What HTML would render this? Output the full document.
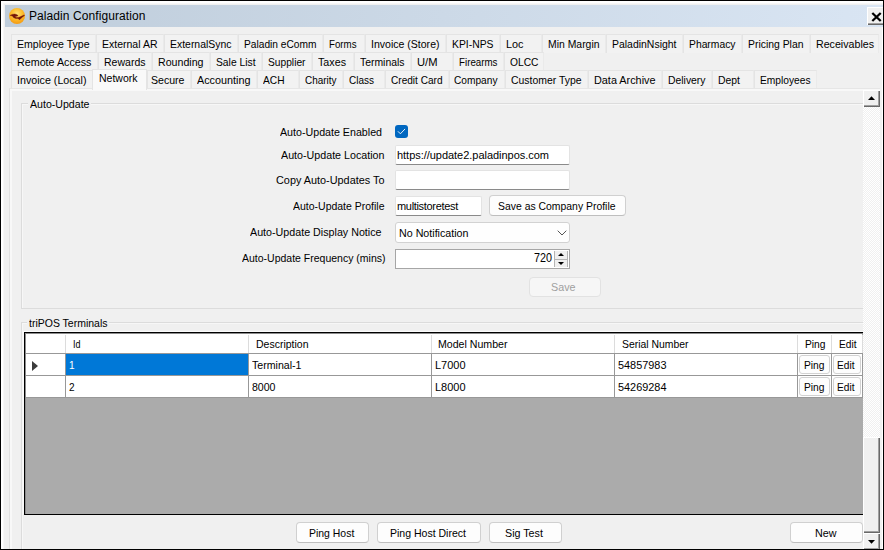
<!DOCTYPE html>
<html lang="en"><head><meta charset="utf-8"><title>Paladin Configuration</title>
<style>
html,body{margin:0;padding:0;}
body{width:884px;height:550px;overflow:hidden;background:#f0f0f0;font-family:"Liberation Sans",sans-serif;}
#win{position:absolute;left:0;top:0;width:884px;height:550px;background:#f0f0f0;overflow:hidden;}
#win>*{position:absolute;}
#frame{left:0;top:0;width:884px;height:550px;box-sizing:border-box;border:1px solid #000;box-shadow:inset 2px 2px 0 #fff,inset 3px 3px 0 #f7f7f7;pointer-events:none;}
#cap{left:5px;top:5px;width:878px;height:22px;background:linear-gradient(90deg,#bfcddb,#d9e5f3);}
#ico{left:8px;top:7px;}
.t{position:absolute;display:inline-block;white-space:nowrap;line-height:1;color:#000;font-size:11.5px;transform-origin:0 0;}
.cap{color:#000;}
.seg{}
#close{left:867px;top:7px;width:19px;height:18px;background:#f0f0f0;box-shadow:inset 1px 1px 0 #fff,inset -1px -1px 0 #696969,inset -2px -2px 0 #a0a0a0;}
#close svg{position:absolute;left:4px;top:4.8px;}
.tab{height:19px;box-sizing:border-box;border:1px solid #e4e4e4;border-right-color:#eaeaea;border-bottom:none;background:#f2f2f2;}
#tabpage{left:9px;top:88px;width:880px;height:470px;box-sizing:border-box;border:1px solid #e0e0e0;border-top-color:#e6e6e6;box-shadow:inset 2px 2px 0 #f8f8f8;}
#seltab{left:92px;top:69px;width:55px;height:21px;box-sizing:border-box;border:1px solid #e4e4e4;border-bottom:none;background:#f9f9f9;}
.grp{box-sizing:border-box;border:1px solid #dcdcdc;box-shadow:inset 1px 1px 0 #f7f7f7;}
.lbg{height:12px;background:#f0f0f0;}
#chk{left:395px;top:125px;width:13px;height:13px;border-radius:3px;background:#0067c0;}
#chk svg{position:absolute;left:0;top:0;}
.tb{box-sizing:border-box;background:#fff;border:1px solid #e3e3e3;border-bottom:1px solid #8a8a8a;border-radius:2px;}
.btn{box-sizing:border-box;background:#fdfdfd;border:1px solid #d0d0d0;border-bottom-color:#bebebe;border-radius:4px;}
.btn.dis{background:#f6f6f6;border-color:#e2e2e2;}
.cmb{box-sizing:border-box;background:#fefefe;border:1px solid #d2d2d2;border-radius:3px;}
#num{left:395px;top:249px;width:175px;height:20px;box-sizing:border-box;border:1px solid #a6a6a6;background:#fff;}
#num .sp{position:absolute;left:158px;width:14px;height:8px;box-sizing:border-box;background:#f0f0f0;border:1px solid #b4b4b4;border-top:none;border-bottom:none;}
#num i{position:absolute;left:3px;width:0;height:0;border-left:3px solid transparent;border-right:3px solid transparent;}
#num i.up{top:2px;border-bottom:3px solid #000;}
#num i.dn{top:1.5px;border-top:3px solid #000;}
#grid{left:24px;top:332px;width:845px;height:183px;box-sizing:border-box;background:#ababab;border:1px solid #000;box-shadow:-1px -1px 0 #fbfbfb;overflow:hidden;}
.g1{left:0;top:0;width:100%;height:1px;background:#8c8c8c;}
.g2{left:0;top:0;width:1px;height:100%;background:#8c8c8c;}
#grid>*{position:absolute;}
#ghead{left:0;top:1px;width:837px;height:19px;background:#fff;}
.row{left:0;width:837px;height:21px;background:#fff;}
.vl{top:20px;width:1px;height:45px;background:#989898;}
.vh{top:2px;width:1px;height:18px;background:#dcdcdc;}
.hl{left:0;height:1px;width:838px;background:#989898;}
#selc{left:41px;top:21px;width:182px;height:21px;background:#0078d7;}
#arrow{left:7px;top:27.5px;width:0;height:0;border-top:5px solid transparent;border-bottom:5px solid transparent;border-left:6px solid #3c3c3c;}
.gb{height:19px;box-sizing:border-box;background:#fdfdfd;border:1px solid #d2d2d2;border-radius:3px;}
#sb{left:863px;top:90px;width:17px;height:460px;background:#f8f8f8;background-image:conic-gradient(#fff 25%,#f0f0f0 0 50%,#fff 0 75%,#f0f0f0 0);background-size:2px 2px;}
#sb>*{position:absolute;left:0;}
.sbb{width:17px;height:17px;background:#f0f0f0;box-shadow:inset 1px 1px 0 #fff,inset -1px -1px 0 #696969,inset -2px -2px 0 #a0a0a0;}
#thumb{top:347px;width:17px;height:96px;background:#f0f0f0;box-shadow:inset 1px 1px 0 #fff,inset -1px -1px 0 #696969,inset -2px -2px 0 #a0a0a0;}
.sbb svg{position:absolute;left:5px;}
.up2{top:6px;}
.dn2{top:7px;}
#edge{left:880px;top:27px;width:3px;height:522px;background:#f0f0f0;box-shadow:inset -1px 0 0 #fff;}
</style></head>
<body>
<div id="win">
<div id="cap"></div>
<svg id="ico" width="18" height="18" viewBox="0 0 18 18"><defs><radialGradient id="g" cx="0.5" cy="0.36" r="0.62"><stop offset="0" stop-color="#ffe27a"/><stop offset="0.55" stop-color="#fdbb2c"/><stop offset="1" stop-color="#f59d14"/></radialGradient></defs><circle cx="9" cy="9" r="8" fill="url(#g)"/><path transform="translate(-2,-2) scale(0.04)" d="M100,262 L150,235 L215,225 L260,235 L295,255 L300,268 L270,280 L235,290 L230,303 L260,315 L300,310 L345,298 L395,278 L440,255 L465,250 L450,275 L412,300 L380,330 L357,350 L335,372 L322,347 L290,337 L240,337 L200,320 L180,308 L175,285 L140,270 Z" fill="#74130a" stroke="#74130a" stroke-width="9" stroke-linejoin="round"/></svg>
<span id="t1" class="t cap" style="left:29px;top:10px;font-size:12px;letter-spacing:0.079px;">Paladin Configuration</span>
<div id="close"><svg width="11" height="10" viewBox="0 0 11 10"><path d="M1.3 1 L9.7 9 M9.7 1 L1.3 9" stroke="#000" stroke-width="2.3" fill="none"/></svg></div>
<div class="tab" style="left:11px;top:34px;width:85px;"></div>
<span id="t2" class="t " style="left:17px;top:39px;transform:scaleX(0.9170);">Employee Type</span>
<div class="tab" style="left:96px;top:34px;width:68px;"></div>
<span id="t3" class="t " style="left:102px;top:39px;transform:scaleX(0.9138);">External AR</span>
<div class="tab" style="left:164px;top:34px;width:74px;"></div>
<span id="t4" class="t " style="left:170px;top:39px;transform:scaleX(0.9075);">ExternalSync</span>
<div class="tab" style="left:238px;top:34px;width:85px;"></div>
<span id="t5" class="t " style="left:244px;top:39px;transform:scaleX(0.8860);">Paladin eComm</span>
<div class="tab" style="left:323px;top:34px;width:42px;"></div>
<span id="t6" class="t " style="left:329px;top:39px;transform:scaleX(0.8437);">Forms</span>
<div class="tab" style="left:365px;top:34px;width:81px;"></div>
<span id="t7" class="t " style="left:371px;top:39px;transform:scaleX(0.9160);">Invoice (Store)</span>
<div class="tab" style="left:446px;top:34px;width:54px;"></div>
<span id="t8" class="t " style="left:452px;top:39px;transform:scaleX(0.9019);">KPI-NPS</span>
<div class="tab" style="left:500px;top:34px;width:42px;"></div>
<span id="t9" class="t " style="left:506px;top:39px;transform:scaleX(0.9436);">Loc</span>
<div class="tab" style="left:542px;top:34px;width:64px;"></div>
<span id="t10" class="t " style="left:548px;top:39px;transform:scaleX(0.9052);">Min Margin</span>
<div class="tab" style="left:606px;top:34px;width:77px;"></div>
<span id="t11" class="t " style="left:612px;top:39px;transform:scaleX(0.9089);">PaladinNsight</span>
<div class="tab" style="left:683px;top:34px;width:59px;"></div>
<span id="t12" class="t " style="left:689px;top:39px;transform:scaleX(0.8980);">Pharmacy</span>
<div class="tab" style="left:742px;top:34px;width:68px;"></div>
<span id="t13" class="t " style="left:748px;top:39px;transform:scaleX(0.9043);">Pricing Plan</span>
<div class="tab" style="left:810px;top:34px;width:69px;"></div>
<span id="t14" class="t " style="left:816px;top:39px;transform:scaleX(0.9257);">Receivables</span>
<div class="tab" style="left:11px;top:52px;width:87px;"></div>
<span id="t15" class="t " style="left:17px;top:57px;transform:scaleX(0.9323);">Remote Access</span>
<div class="tab" style="left:98px;top:52px;width:54px;"></div>
<span id="t16" class="t " style="left:104px;top:57px;transform:scaleX(0.9143);">Rewards</span>
<div class="tab" style="left:152px;top:52px;width:58px;"></div>
<span id="t17" class="t " style="left:158px;top:57px;transform:scaleX(0.9242);">Rounding</span>
<div class="tab" style="left:210px;top:52px;width:52px;"></div>
<span id="t18" class="t " style="left:216px;top:57px;transform:scaleX(0.8955);">Sale List</span>
<div class="tab" style="left:262px;top:52px;width:50px;"></div>
<span id="t19" class="t " style="left:268px;top:57px;transform:scaleX(0.8886);">Supplier</span>
<div class="tab" style="left:312px;top:52px;width:42px;"></div>
<span id="t20" class="t " style="left:318px;top:57px;transform:scaleX(0.9319);">Taxes</span>
<div class="tab" style="left:354px;top:52px;width:57px;"></div>
<span id="t21" class="t " style="left:360px;top:57px;transform:scaleX(0.9041);">Terminals</span>
<div class="tab" style="left:411px;top:52px;width:42px;"></div>
<span id="t22" class="t " style="left:417px;top:57px;transform:scaleX(0.9719);">U/M</span>
<div class="tab" style="left:453px;top:52px;width:51px;"></div>
<span id="t23" class="t " style="left:459px;top:57px;transform:scaleX(0.8485);">Firearms</span>
<div class="tab" style="left:504px;top:52px;width:40px;"></div>
<span id="t24" class="t " style="left:510px;top:57px;transform:scaleX(0.8919);">OLCC</span>
<div class="tab" style="left:11px;top:70px;width:82px;"></div>
<span id="t25" class="t " style="left:17px;top:75px;transform:scaleX(0.9292);">Invoice (Local)</span>
<div class="tab" style="left:147px;top:70px;width:44px;"></div>
<span id="t26" class="t " style="left:151px;top:75px;transform:scaleX(0.9194);">Secure</span>
<div class="tab" style="left:191px;top:70px;width:66px;"></div>
<span id="t27" class="t " style="left:197px;top:75px;transform:scaleX(0.9401);">Accounting</span>
<div class="tab" style="left:257px;top:70px;width:42px;"></div>
<span id="t28" class="t " style="left:263px;top:75px;transform:scaleX(0.8855);">ACH</span>
<div class="tab" style="left:299px;top:70px;width:44px;"></div>
<span id="t29" class="t " style="left:305px;top:75px;transform:scaleX(0.8645);">Charity</span>
<div class="tab" style="left:343px;top:70px;width:42px;"></div>
<span id="t30" class="t " style="left:349px;top:75px;transform:scaleX(0.8691);">Class</span>
<div class="tab" style="left:385px;top:70px;width:64px;"></div>
<span id="t31" class="t " style="left:391px;top:75px;transform:scaleX(0.8757);">Credit Card</span>
<div class="tab" style="left:449px;top:70px;width:56px;"></div>
<span id="t32" class="t " style="left:454px;top:75px;transform:scaleX(0.8838);">Company</span>
<div class="tab" style="left:505px;top:70px;width:83px;"></div>
<span id="t33" class="t " style="left:511px;top:75px;transform:scaleX(0.9066);">Customer Type</span>
<div class="tab" style="left:588px;top:70px;width:74px;"></div>
<span id="t34" class="t " style="left:594px;top:75px;transform:scaleX(0.9432);">Data Archive</span>
<div class="tab" style="left:662px;top:70px;width:50px;"></div>
<span id="t35" class="t " style="left:668px;top:75px;transform:scaleX(0.9026);">Delivery</span>
<div class="tab" style="left:712px;top:70px;width:42px;"></div>
<span id="t36" class="t " style="left:718px;top:75px;transform:scaleX(0.9055);">Dept</span>
<div class="tab" style="left:754px;top:70px;width:63px;"></div>
<span id="t37" class="t " style="left:760px;top:75px;transform:scaleX(0.8877);">Employees</span>
<div id="tabpage"></div>
<div id="seltab"></div>
<span id="t38" class="t " style="left:99px;top:73px;transform:scaleX(0.9126);">Network</span>
<div class="grp" style="left:21px;top:103px;width:850px;height:206px;"></div>
<div class="lbg" style="left:28px;top:98px;width:63px;"></div>
<span id="t39" class="t " style="left:30px;top:99px;transform:scaleX(0.9214);">Auto-Update</span>
<span id="t40" class="t " style="left:280px;top:127px;transform:scaleX(0.9275);">Auto-Update Enabled</span>
<span id="t41" class="t " style="left:281px;top:150px;transform:scaleX(0.9303);">Auto-Update Location</span>
<span id="t42" class="t " style="left:276px;top:175px;transform:scaleX(0.9445);">Copy Auto-Updates To</span>
<span id="t43" class="t " style="left:293px;top:201px;transform:scaleX(0.9116);">Auto-Update Profile</span>
<span id="t44" class="t " style="left:250px;top:227px;transform:scaleX(0.9309);">Auto-Update Display Notice</span>
<span id="t45" class="t " style="left:242px;top:253px;transform:scaleX(0.9127);">Auto-Update Frequency (mins)</span>
<div id="chk"><svg width="13" height="13" viewBox="0 0 13 13"><path d="M3.2 6.6 L5.4 8.8 L9.8 4.2" stroke="#f4f8fc" stroke-width="0.95" fill="none" stroke-linecap="round" stroke-linejoin="round"/></svg></div>
<div class="tb" style="left:395px;top:145px;width:175px;height:20px;"></div>
<span id="t46" class="t seg" style="left:397px;top:150px;font-size:11px;letter-spacing:-0.033px;">https://update2.paladinpos.com</span>
<div class="tb" style="left:395px;top:170px;width:175px;height:20px;"></div>
<div class="tb" style="left:395px;top:196px;width:87px;height:20px;"></div>
<span id="t47" class="t seg" style="left:397px;top:201px;font-size:11px;letter-spacing:-0.322px;">multistoretest</span>
<div class="btn" style="left:489px;top:195px;width:137px;height:21px;"></div>
<span id="t48" class="t " style="left:498px;top:201px;transform:scaleX(0.9055);">Save as Company Profile</span>
<div class="cmb" style="left:395px;top:222px;width:175px;height:21px;"><svg width="10" height="6" viewBox="0 0 10 6" style="position:absolute;right:2.5px;top:7px"><path d="M0.7 0.7 L5 5 L9.3 0.7" stroke="#555" stroke-width="1" fill="none"/></svg></div>
<span id="t49" class="t " style="left:399px;top:228px;transform:scaleX(0.9292);">No Notification</span>
<div id="num"><div class="sp" style="top:1px"><i class="up"></i></div><div class="sp" style="top:9px;border-top:1px solid #b4b4b4"><i class="dn"></i></div></div>
<span id="t50" class="t " style="left:534px;top:252px;font-size:12px;transform:scaleX(0.8986);">720</span>
<div class="btn dis" style="left:529px;top:277px;width:72px;height:20px;"></div>
<span id="t51" class="t " style="left:551px;top:282px;transform:scaleX(0.9344);color:#a0a0a0;">Save</span>
<div class="grp" style="left:21px;top:322px;width:850px;height:240px;"></div>
<div class="lbg" style="left:27px;top:317px;width:82px;"></div>
<span id="t52" class="t " style="left:29px;top:318px;transform:scaleX(0.9121);">triPOS Terminals</span>
<div id="grid">
<div id="ghead"></div>
<div class="row" style="top:21px"></div><div class="row" style="top:43px"></div>
<div class="vh" style="left:40px"></div>
<div class="vl" style="left:40px"></div>
<div class="vh" style="left:223px"></div>
<div class="vl" style="left:223px"></div>
<div class="vh" style="left:406px"></div>
<div class="vl" style="left:406px"></div>
<div class="vh" style="left:589px"></div>
<div class="vl" style="left:589px"></div>
<div class="vh" style="left:772px"></div>
<div class="vl" style="left:772px"></div>
<div class="vh" style="left:806px"></div>
<div class="vl" style="left:806px"></div>
<div class="vh" style="left:837px"></div>
<div class="vl" style="left:837px"></div>
<div class="hl" style="top:20px"></div><div class="hl" style="top:42px"></div><div class="hl" style="top:64px"></div>
<div id="selc"></div>
<div id="arrow"></div>
<div class="g1"></div><div class="g2"></div>
<div class="gb" style="left:774px;top:22px;width:31px;"></div>
<div class="gb" style="left:808px;top:22px;width:28px;"></div>
<div class="gb" style="left:774px;top:44px;width:31px;"></div>
<div class="gb" style="left:808px;top:44px;width:28px;"></div>
</div>
<span id="t53" class="t " style="left:73px;top:339px;transform:scaleX(0.7818);">Id</span>
<span id="t54" class="t " style="left:256px;top:339px;transform:scaleX(0.9125);">Description</span>
<span id="t55" class="t " style="left:438px;top:339px;transform:scaleX(0.9215);">Model Number</span>
<span id="t56" class="t " style="left:622px;top:339px;transform:scaleX(0.9048);">Serial Number</span>
<span id="t57" class="t " style="left:805px;top:339px;transform:scaleX(0.8901);">Ping</span>
<span id="t58" class="t " style="left:839px;top:339px;transform:scaleX(0.8826);">Edit</span>
<span id="t59" class="t " style="left:69px;top:360px;transform:scaleX(0.8750);color:#fff;">1</span>
<span id="t60" class="t " style="left:252px;top:360px;transform:scaleX(0.9220);">Terminal-1</span>
<span id="t61" class="t " style="left:435px;top:360px;transform:scaleX(0.9536);">L7000</span>
<span id="t62" class="t " style="left:618px;top:360px;transform:scaleX(0.9478);">54857983</span>
<span id="t63" class="t " style="left:804px;top:360px;transform:scaleX(0.8901);">Ping</span>
<span id="t64" class="t " style="left:837px;top:360px;transform:scaleX(0.8826);">Edit</span>
<span id="t65" class="t " style="left:69px;top:382px;transform:scaleX(0.8750);">2</span>
<span id="t66" class="t " style="left:252px;top:382px;transform:scaleX(0.9182);">8000</span>
<span id="t67" class="t " style="left:435px;top:382px;transform:scaleX(0.9536);">L8000</span>
<span id="t68" class="t " style="left:618px;top:382px;transform:scaleX(0.9478);">54269284</span>
<span id="t69" class="t " style="left:804px;top:382px;transform:scaleX(0.8901);">Ping</span>
<span id="t70" class="t " style="left:837px;top:382px;transform:scaleX(0.8826);">Edit</span>
<div class="btn" style="left:296px;top:522px;width:73px;height:21px;"></div>
<span id="t71" class="t " style="left:309px;top:528px;transform:scaleX(0.9086);">Ping Host</span>
<div class="btn" style="left:377px;top:522px;width:104px;height:21px;"></div>
<span id="t72" class="t " style="left:390px;top:528px;transform:scaleX(0.9146);">Ping Host Direct</span>
<div class="btn" style="left:489px;top:522px;width:73px;height:21px;"></div>
<span id="t73" class="t " style="left:505px;top:528px;transform:scaleX(0.9311);">Sig Test</span>
<div class="btn" style="left:790px;top:522px;width:73px;height:21px;"></div>
<span id="t74" class="t " style="left:815px;top:528px;transform:scaleX(0.9341);">New</span>
<div id="sb"><div class="sbb" style="top:0"><svg class="up2" width="7" height="4" viewBox="0 0 7 4"><path d="M0 4 L3.5 0.2 L7 4 Z" fill="#000"/></svg></div><div id="thumb"></div><div class="sbb" style="top:443px"><svg class="dn2" width="7" height="4" viewBox="0 0 7 4"><path d="M0 0 L3.5 3.8 L7 0 Z" fill="#000"/></svg></div></div>
<div id="edge"></div>
<div id="frame"></div>
</div>
</body></html>
